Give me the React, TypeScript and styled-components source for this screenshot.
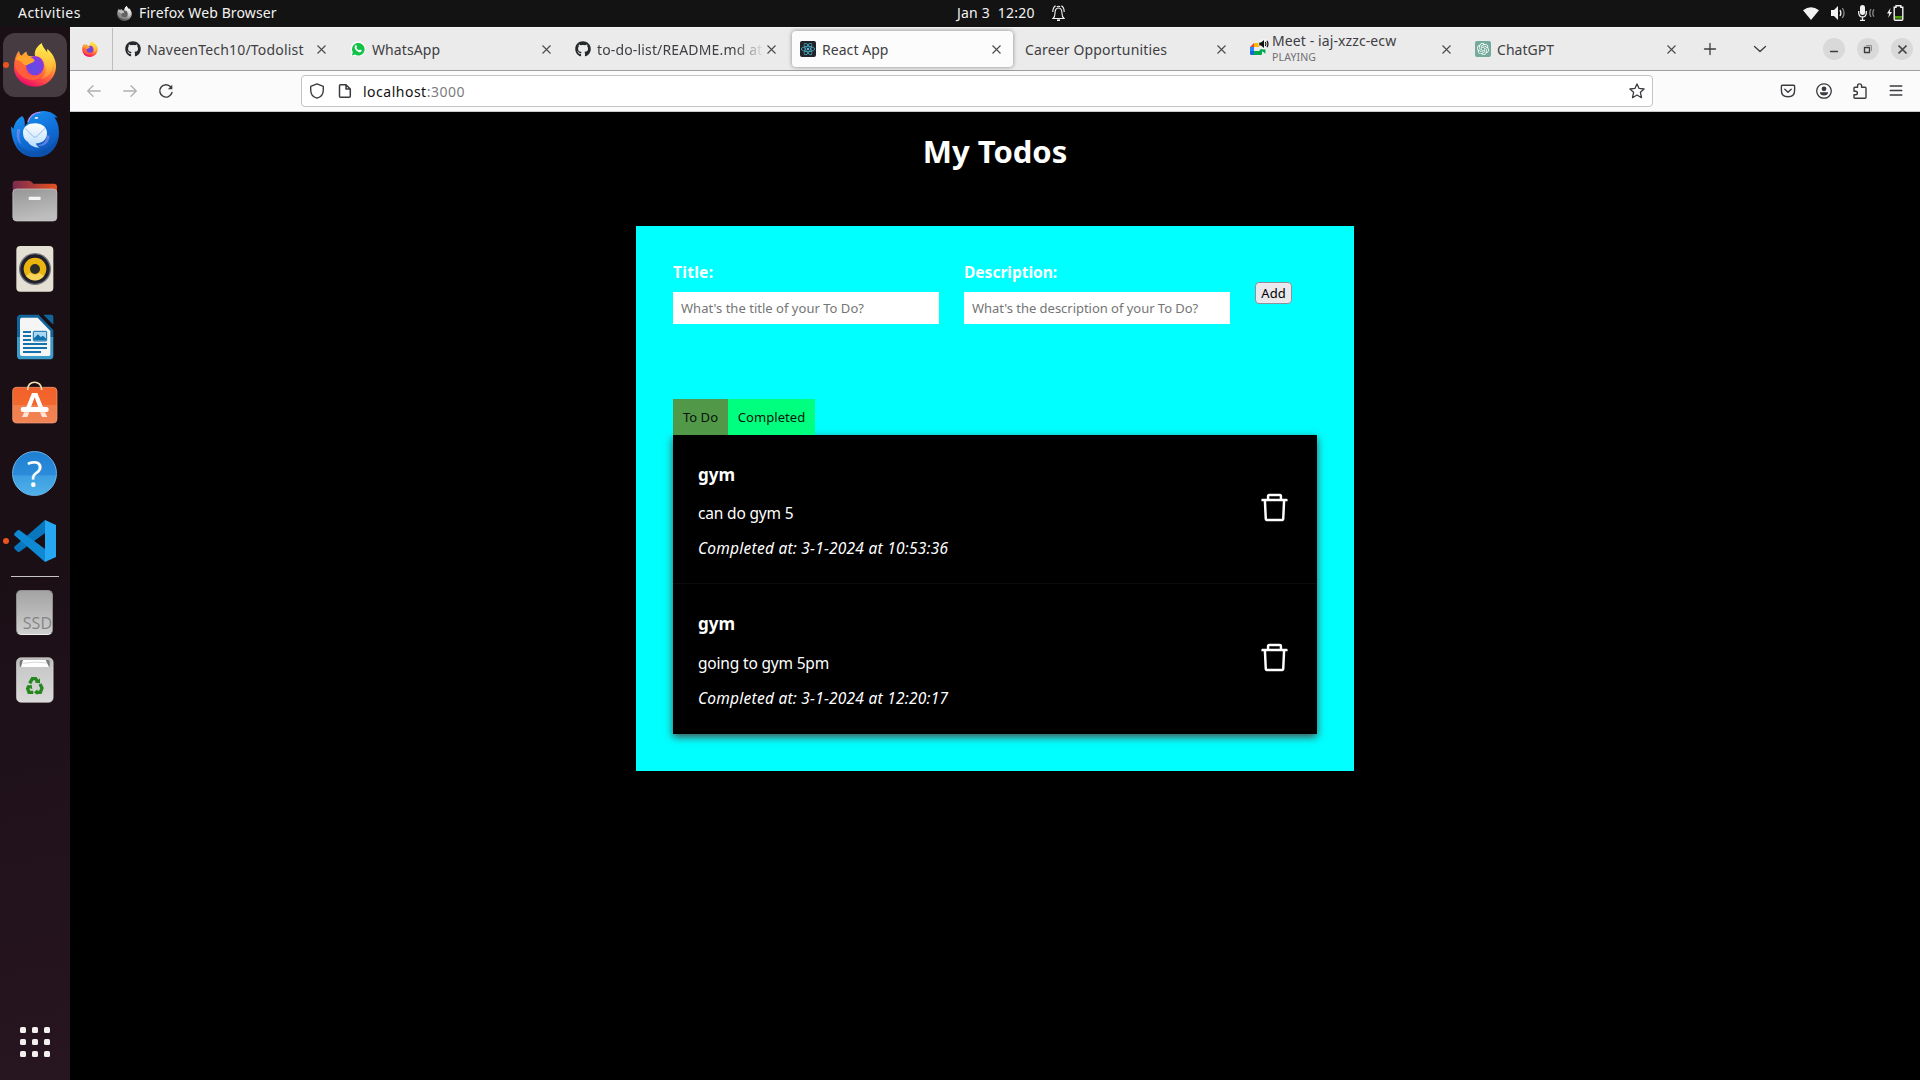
import React from "react";
import styled, { createGlobalStyle, css } from "styled-components";
import { FaGithub, FaReact } from "react-icons/fa";
import { SiOpenai } from "react-icons/si";
import { AiOutlineDelete } from "react-icons/ai";

const GlobalStyle = createGlobalStyle`
  * { box-sizing: border-box; }
  html, body { margin: 0; padding: 0; background: #000; overflow: hidden; }
  body { font-family: "Noto Sans", "Open Sans", sans-serif; }
  svg { display: block; flex: none; }
`;

const Screen = styled.div`
  width: 1920px;
  height: 1080px;
  display: flex;
  flex-direction: column;
  overflow: hidden;
  background: #000;
`;

/* ---------- system bar ---------- */

const SystemBar = styled.header`
  height: 27px;
  flex: none;
  display: grid;
  grid-template-columns: 1fr auto 1fr;
  align-items: center;
  background: #131313;
  color: #f2f2f2;
  font-size: 14px;
  line-height: 24px;
  white-space: nowrap;
`;

const BarLeft = styled.div`
  display: flex;
  align-items: center;
  padding-left: 18px;
`;

const ActivitiesLabel = styled.span`
  width: 99px;
  padding-bottom: 1px;
  letter-spacing: 0.45px;
`;

const FocusedApp = styled.span`
  margin-left: 7px;
  padding-bottom: 1px;
  letter-spacing: 0.12px;
`;

const BarCenter = styled.div`
  display: flex;
  align-items: center;
  gap: 18px;
  padding-left: 102px;
`;

const Clock = styled.span`
  width: 77px;
  padding-bottom: 1px;
  letter-spacing: 0.22px;
  white-space: pre;
`;

const BarRight = styled.div`
  display: flex;
  justify-content: flex-end;
  align-items: center;
  gap: 12px;
  padding: 0 16px 1px 0;
`;

/* ---------- dock ---------- */

const Workspace = styled.div`
  flex: 1;
  display: flex;
  min-height: 0;
`;

const Dock = styled.nav`
  width: 70px;
  flex: none;
  display: flex;
  flex-direction: column;
  align-items: center;
  padding: 4px 0 23px;
  background: linear-gradient(170deg, #1a0f15 0%, #1b0f16 50%, #27151f 100%);
`;

const DockItem = styled.div`
  width: 70px;
  height: 68px;
  flex: none;
  display: grid;
  grid-template-columns: 3px 64px 3px;
  align-items: center;
`;

const RunningDot = styled.span<{ $on?: boolean }>`
  width: 6px;
  height: 6px;
  margin-left: 3px;
  border-radius: 50%;
  background: ${(p) => (p.$on ? "#e95420" : "transparent")};
  z-index: 1;
`;

const DockTile = styled.div<{ $active?: boolean; $lift?: number }>`
  width: 64px;
  height: 64px;
  padding-bottom: ${(p) => p.$lift ?? 0}px;
  border-radius: 12px;
  display: flex;
  align-items: center;
  justify-content: center;
  background: ${(p) => (p.$active ? "#453b40" : "transparent")};
`;

const DockDivider = styled.hr`
  width: 48px;
  height: 1px;
  margin: 1px 0;
  border: 0;
  background: #c6c3c4;
`;

const HelpIcon = styled.div`
  width: 45px;
  height: 45px;
  margin-right: 1px;
  border-radius: 50%;
  border: 1px solid #6db4ea;
  background: linear-gradient(#1f80d2 0%, #2b8cdb 54%, #3d9ee1 55%, #4fb0ea 100%);
  color: #fff;
  font: 400 36px/43px "Open Sans", sans-serif;
  text-align: center;
`;

const DriveIcon = styled.div`
  width: 37px;
  height: 45px;
  margin-right: 1px;
  display: flex;
  align-items: flex-end;
  justify-content: flex-end;
  border-radius: 5px;
  border: 1px solid #8e8e8e;
  border-bottom-color: #eee;
  background: linear-gradient(#a3a3a3, #cfcfcf);
  color: #858585;
  font: 400 16px/22px "Open Sans", sans-serif;
`;

const AppGrid = styled.div`
  margin-top: auto;
  display: grid;
  grid-template-columns: repeat(3, 6px);
  grid-auto-rows: 6px;
  gap: 6px;
`;

const AppDot = styled.i`
  border-radius: 1.5px;
  background: #f2f1f0;
`;

/* ---------- browser chrome ---------- */

const Browser = styled.main`
  flex: 1;
  min-width: 0;
  display: flex;
  flex-direction: column;
  background: #000;
`;

const TabStrip = styled.div`
  height: 44px;
  flex: none;
  display: flex;
  align-items: stretch;
  background: #ebebeb;
  border-bottom: 1px solid #9f9d9f;
  border-top: 1px solid #f6f6f6;
`;

const PinnedTab = styled.div`
  width: 43px;
  padding-left: 12px;
  display: flex;
  align-items: center;
  border-right: 1px solid #bdbdbd;
  margin-right: 2px;
`;

const Tab = styled.div<{ $active?: boolean }>`
  width: 221px;
  height: 36px;
  margin: 3px 2px;
  padding: 0 8px;
  display: flex;
  align-items: center;
  border-radius: 4px;
  color: #3f3e43;
  ${(p) =>
    p.$active &&
    css`
      background: #fcfcfc;
      box-shadow: 0 0 4px rgba(0, 0, 0, 0.42);
    `}
`;

const TabIcon = styled.div`
  width: 16px;
  height: 16px;
  margin-right: 6px;
  flex: none;
`;

const TabText = styled.div<{ $fade?: boolean }>`
  flex: 1;
  min-width: 0;
  overflow: hidden;
  white-space: nowrap;
  ${(p) =>
    p.$fade &&
    css`
      mask-image: linear-gradient(to right, #000 calc(100% - 30px), transparent);
    `}
`;

const TabTitle = styled.div<{ $spacing: number; $tight?: boolean }>`
  padding-top: ${(p) => (p.$tight ? 0 : 2)}px;
  font-size: 14px;
  line-height: ${(p) => (p.$tight ? 16 : 20)}px;
  letter-spacing: ${(p) => p.$spacing}px;
`;

const TabStatus = styled.div`
  padding-top: 1px;
  font-size: 10.5px;
  line-height: 15px;
  color: #716f74;
  letter-spacing: 0.15px;
`;

const TabClose = styled.div`
  width: 16px;
  padding-right: 1px;
  display: flex;
  justify-content: center;
`;

const ReactBadge = styled.div`
  width: 16px;
  height: 16px;
  border-radius: 2px;
  display: grid;
  place-items: center;
  background: #20232a;
  color: #53c1de;
`;

const GptBadge = styled(ReactBadge)`
  background: #74aa9c;
  color: #fff;
`;

const StripActions = styled.div`
  flex: 1;
  display: flex;
  align-items: center;
  justify-content: flex-end;
  padding-right: 7px;
`;

const StripIcon = styled.div<{ $gap: number }>`
  margin-right: ${(p) => p.$gap}px;
`;

const WindowButton = styled.div`
  width: 22px;
  height: 22px;
  margin-left: 12px;
  border-radius: 50%;
  display: grid;
  place-items: center;
  background: #d9d9d9;
`;

const Toolbar = styled.div`
  height: 41px;
  flex: none;
  display: flex;
  align-items: center;
  padding: 0 16px;
  background: #fbfbfb;
  border-bottom: 1px solid #c9c9cb;
`;

const NavButtons = styled.div`
  width: 215px;
  display: flex;
  gap: 20px;
`;

const AddressBar = styled.div`
  width: 1352px;
  height: 32px;
  display: flex;
  align-items: center;
  padding: 0 7px;
  border: 1px solid #c4c3c6;
  border-radius: 4px;
  background: #fff;
`;

const Url = styled.div`
  flex: 1;
  margin-left: 10px;
  padding-top: 2px;
  font-size: 14px;
  line-height: 20px;
  letter-spacing: 0.5px;
  color: #111;
`;

const Port = styled.span`
  color: #7c7c80;
`;

const ToolbarIcons = styled.div`
  flex: 1;
  display: flex;
  justify-content: flex-end;
  gap: 20px;
`;

/* ---------- todo page ---------- */

const Page = styled.section`
  flex: 1;
  display: flex;
  flex-direction: column;
  align-items: center;
  background: #000;
  color: #fff;
`;

const Heading = styled.h1`
  margin: 18px 0 0;
  height: 96px;
  font-size: 31px;
  line-height: 42px;
  font-weight: 700;
`;

const Card = styled.div`
  width: 718px;
  height: 545px;
  padding: 36px 37px;
  background: #00ffff;
`;

const Form = styled.form`
  display: flex;
  align-items: flex-start;
  gap: 25px;
  height: 137px;
`;

const Field = styled.label`
  width: 266px;
  display: flex;
  flex-direction: column;
`;

const FieldName = styled.span<{ $spacing: number }>`
  height: 30px;
  font-size: 15.5px;
  line-height: 21px;
  font-weight: 700;
  letter-spacing: ${(p) => p.$spacing}px;
`;

const TextInput = styled.input<{ $spacing: number }>`
  width: 266px;
  height: 32px;
  padding: 0 8px;
  border: 0;
  background: #fff;
  font: 400 13px "Noto Sans", sans-serif;
  letter-spacing: ${(p) => p.$spacing}px;
  &::placeholder {
    color: #757575;
    opacity: 1;
  }
`;

const AddButton = styled.button`
  width: 37px;
  height: 22px;
  margin-top: 20px;
  padding: 0;
  border: 1px solid #8f8f9d;
  border-radius: 4px;
  background: #e9e9ed;
  color: #000;
  font: 400 13px/19px "Noto Sans", sans-serif;
`;

const Filters = styled.div`
  display: flex;
  height: 36px;
`;

const Filter = styled.button<{ $width: number; $color: string }>`
  width: ${(p) => p.$width}px;
  height: 36px;
  padding: 0;
  border: 0;
  background: ${(p) => p.$color};
  color: #05130a;
  font: 400 13px/36px "Noto Sans", sans-serif;
  letter-spacing: 0.05px;
`;

const TodoList = styled.div`
  height: 299px;
  background: #000;
  box-shadow: 0 3px 8px #4c4c4c;
`;

const TodoTitle = styled.h3`
  margin: 0 0 14px;
  font-size: 17px;
  line-height: 26px;
  font-weight: 700;
`;

const TodoText = styled.p`
  margin: 0 0 13px;
  font-size: 15.5px;
  line-height: 22px;
  letter-spacing: -0.18px;
  white-space: nowrap;
`;

const TodoDone = styled.p`
  margin: 0;
  font-size: 15.5px;
  line-height: 22px;
  font-style: italic;
  letter-spacing: 0.24px;
  white-space: nowrap;
`;

const DeleteIcon = styled(AiOutlineDelete)`
  width: 35px;
  height: 35px;
  margin-top: 28px;
`;

const Todo = styled.article`
  height: 148px;
  display: flex;
  align-items: flex-start;
  justify-content: space-between;
  padding: 27px 25px 0 25px;
  & + & {
    height: 151px;
    border-top: 1px solid #0c0c0c;
  }
  & + & ${TodoTitle} {
    margin-bottom: 15px;
  }
  & + & ${DeleteIcon} {
    margin-top: 29px;
  }
`;

/* ---------- drawings ---------- */

const GrayLogo = styled.div`
  filter: grayscale(1) brightness(1.1);
`;

function Firefox({ w, h, id }: { w: number; h: number; id: string }) {
  return (
    <svg width={w} height={h} viewBox="42 53 126 130">
      <defs>
        <linearGradient id={`${id}a`} x1="0.75" y1="0.05" x2="0.3" y2="1">
          <stop offset="0" stopColor="#fff44f" />
          <stop offset="0.3" stopColor="#ffb932" />
          <stop offset="0.55" stopColor="#ff7139" />
          <stop offset="0.8" stopColor="#ff3750" />
          <stop offset="1" stopColor="#e2056e" />
        </linearGradient>
        <radialGradient id={`${id}b`} cx="0.45" cy="0.6" r="0.6">
          <stop offset="0" stopColor="#5b4fe0" />
          <stop offset="0.7" stopColor="#7a3fe4" />
          <stop offset="1" stopColor="#a02fd0" />
        </radialGradient>
        <linearGradient id={`${id}c`} x1="0.5" y1="0" x2="0.4" y2="1">
          <stop offset="0" stopColor="#fff050" />
          <stop offset="0.6" stopColor="#ffbd3a" />
          <stop offset="1" stopColor="#ff7a3c" />
        </linearGradient>
      </defs>
      <path fill={`url(#${id}a)`} d="M42 124C42 103 47 87 57 75C58 82 60 86 64 90C69 86 73 79 80 78C79 83 82 88 87 91L106 92C102 83 105 67 125 53C127 65 133 74 142 83C141 77 141 73 142 70C154 79 168 99 168 121C168 156 140 183 105 183C70 183 42 157 42 124Z" />
      <path fill={`url(#${id}c)`} d="M106 94C101 80 110 63 125 53C128 69 155 88 157 114C159 140 143 156 122 161C134 149 139 139 136 124C133 107 120 98 106 94Z" />
      <path fill="#ff6a36" d="M44 112C52 98 70 94 84 95C70 105 70 135 84 145C100 154 118 153 130 141C126 160 100 168 80 160C60 152 46 135 44 112Z" opacity="0.75" />
      <ellipse cx="105" cy="120" rx="27" ry="29" fill={`url(#${id}b)`} />
      <path fill="#ffa52e" d="M47 101C53 89 61 87 70 92C82 91 98 94 104 104C101 113 88 112 81 119C73 119 69 116 65 108C58 106 52 103 47 101Z" />
    </svg>
  );
}

const Thunderbird = () => (
  <svg width="48" height="48" viewBox="33 251 144 144">
    <defs>
      <linearGradient id="tb" x1="0" y1="0" x2="0.5" y2="1">
        <stop offset="0" stopColor="#1b9bf5" />
        <stop offset="0.6" stopColor="#1170da" />
        <stop offset="1" stopColor="#0d55b8" />
      </linearGradient>
      <linearGradient id="tbm" x1="0" y1="0" x2="0" y2="1">
        <stop offset="0" stopColor="#fff" />
        <stop offset="1" stopColor="#b9dcfb" />
      </linearGradient>
    </defs>
    <path fill="url(#tb)" d="M33 303L40 311C43 294 52 280 67 272C75 281 75 294 74 303L84 292C88 272 105 257 132 257C151 258 163 266 173 277L163 276C170 286 177 299 177 323C177 365 148 396 107 396C65 396 34 365 33 303Z" />
    <path fill="#0d4ea6" opacity="0.55" d="M49 351C66 373 91 383 116 377C145 372 167 353 174 333C172 371 146 396 107 396C81 396 58 383 49 351Z" />
    <path fill="none" stroke="#b58af0" strokeWidth="4" d="M83 291C89 272 104 261 121 261" />
    <path fill="#7f8ff0" opacity="0.7" d="M52 311C47 330 52 349 64 357C56 340 57 324 62 312ZM140 330C140 346 132 358 111 360C131 367 147 353 149 331Z" />
    <path fill="url(#tbm)" d="M69 322C69 304 85 294 106 294C127 294 141 307 141 323C141 342 128 354 108 354C109 360 112 364 119 367C100 367 88 358 84 350C75 345 69 336 69 322Z" />
    <path fill="none" stroke="#8cbcf0" strokeWidth="3" d="M75 309L100 334Q105 338 110 334L135 309" />
    <path fill="#fff" d="M103 279Q109 272 115 277Q111 283 103 279Z" />
  </svg>
);

const Files = () => (
  <svg width="46" height="42" viewBox="37 467 138 124">
    <defs>
      <linearGradient id="fb" x1="0" x2="1">
        <stop offset="0" stopColor="#792a50" />
        <stop offset="1" stopColor="#e8521f" />
      </linearGradient>
      <linearGradient id="ff" x1="0" y1="0" x2="0.3" y2="1">
        <stop offset="0" stopColor="#969696" />
        <stop offset="1" stopColor="#bebebe" />
      </linearGradient>
    </defs>
    <path fill="url(#fb)" d="M39 510V477Q39 468 48 468H88Q93 468 97 473L101 477H163Q172 477 172 486V510Z" />
    <rect x="39.5" y="493" width="132" height="96" rx="11" fill="url(#ff)" stroke="#cfcfcf" strokeWidth="2" />
    <rect x="87" y="516" width="36" height="10" rx="3" fill="#f5f5f5" />
  </svg>
);

const Rhythmbox = () => (
  <svg width="38" height="46" viewBox="48 664 114 138">
    <rect x="49" y="664" width="111" height="137" rx="12" fill="#e5e0d4" />
    <circle cx="105" cy="733" r="48" fill="#73737a" />
    <circle cx="105" cy="733" r="44" fill="#20202c" />
    <circle cx="105" cy="733" r="34" fill="#eab30e" />
    <path d="M78 754A34 34 0 0 0 132 754L118 744A17 17 0 0 1 92 744Z" fill="#f8d558" />
    <circle cx="105" cy="733" r="15" fill="#2c2c2a" />
  </svg>
);

const Writer = () => (
  <svg width="38" height="46" viewBox="48 42 114 138">
    <path fill="#11659c" d="M62 44H116L160 90V112H51V55Q51 44 62 44Z" />
    <path fill="#3a9aca" d="M51 111H160V167Q160 178 149 178H62Q51 178 51 167Z" />
    <path fill="#f5f5f5" d="M66 53H113L151 93V163Q151 168 146 168H66Q60 168 60 162V59Q60 53 66 53Z" />
    <path fill="#1a0f15" d="M116 43H129L161 75V91Z" />
    <path fill="#11659c" d="M130 44H154Q160 44 160 50V74Z" />
    <path stroke="#1272ae" strokeWidth="5.5" d="M69 96H93M69 108H93M69 120H93M69 132H141M69 144H141M69 156H123" />
    <rect x="100" y="94" width="40" height="29" rx="2" fill="#a9d8f5" stroke="#1272ae" strokeWidth="3" />
    <path fill="#1272ae" d="M102 121V114L114 103L122 111L129 107L139 116V121Z" />
  </svg>
);

const Software = () => (
  <svg width="46" height="44" viewBox="37 240 138 132">
    <defs>
      <linearGradient id="sw" x1="0" y1="0" x2="0" y2="1">
        <stop offset="0" stopColor="#f2602a" />
        <stop offset="0.5" stopColor="#f2692f" />
        <stop offset="0.51" stopColor="#f37e4c" />
        <stop offset="1" stopColor="#f08455" />
      </linearGradient>
    </defs>
    <rect x="39" y="262" width="133" height="107" rx="12" fill="url(#sw)" stroke="#f9a27c" strokeWidth="2" />
    <path fill="none" stroke="#f6dfb0" strokeWidth="5" d="M84 270C82 239 127 239 126 270" />
    <path fill="#fff" d="M97 279H113L130 321H116L105 292L94 321H80Z" />
    <path fill="#ffe4da" d="M74 337H89L83 351H67ZM121 337H136L143 351H127Z" />
    <rect x="63" y="321" width="84" height="15" rx="7" fill="#fff" />
  </svg>
);

const Code = () => (
  <svg width="42" height="42" viewBox="42 660 126 126">
    <path fill="#0877bd" d="M135 660L43 740Q41 744 45 748L53 755Q57 757 61 754L135 699Z" />
    <path fill="#1089d4" d="M135 786L43 706Q41 702 45 698L53 691Q57 689 61 692L135 747Z" />
    <path fill="#26a7f2" d="M135 660L168 675V771L135 786Z" />
  </svg>
);

const Trash = () => (
  <svg width="38" height="46" viewBox="49 291 114 138">
    <defs>
      <linearGradient id="tr" x1="0" y1="0" x2="0" y2="1">
        <stop offset="0" stopColor="#b8b8b8" />
        <stop offset="0.2" stopColor="#c8c8c8" />
        <stop offset="1" stopColor="#dadada" />
      </linearGradient>
    </defs>
    <rect x="50.5" y="293" width="110" height="134" rx="14" fill="url(#tr)" stroke="#eee" strokeWidth="1.5" />
    <path fill="#777" d="M60 306Q60 300 66 300H144Q150 300 150 306V320H60Z" />
    <path fill="#fff" d="M64 321L70 300H138L148 321Z" />
    <path fill="none" stroke="#aaa" strokeWidth="1.5" d="M70 310Q105 303 143 309" />
    <g fill="none" stroke="#26871f" strokeWidth="10">
      <path d="M90 370L98 356H108L113 364" />
      <path d="M121 372L127 384L122 397H111" />
      <path d="M101 397H88L84 386L89 377" />
    </g>
    <path fill="#26871f" d="M106 368L121 370L121 355ZM113 388V405L103 397ZM79 379L96 374L98 388Z" />
  </svg>
);

const WhatsApp = () => (
  <svg width="16" height="16" viewBox="0 0 16 16">
    <path fill="#fff" d="M0.6 15.6L1.7 11.6A7.5 7.5 0 1 1 4.8 14.5Z" />
    <path fill="#12c148" d="M1.9 14.4L2.8 11.3A6.3 6.3 0 1 1 5 13.6Z" />
    <path fill="#fff" d="M5.5 4.3C6.2 3.8 6.5 4.2 6.7 4.9C7.1 5.9 7 6 6.3 6.8C6.9 8 7.8 8.8 9 9.3C9.9 8.3 9.9 8.4 11.3 9.1C12.1 9.5 11.6 10.6 10.7 11.1C9.5 11.7 8 11 6.6 9.8C4.7 8.1 3.8 5.8 5.5 4.3Z" />
  </svg>
);

const MeetLogo = styled.svg`
  margin-top: -3px;
`;

const Meet = () => (
  <MeetLogo width="21" height="18" viewBox="0 0 21 18">
    <path fill="#ea4335" d="M0 9L4 5V9Z" />
    <path fill="#2684fc" d="M0 9H4V13H0Z" />
    <path fill="#1967d2" d="M0 13H4V17H1.5Q0 17 0 15.5Z" />
    <path fill="#fbbc04" d="M4 5H11Q12 5 12 6V9H4Z" />
    <path fill="#00a94b" d="M4 13H9L12 10V15.5Q12 17 11 17H4ZM12 11L15.4 8.5V15.7L12 13Z" />
    <circle cx="14" cy="6" r="5.6" fill="#f3f3f3" />
    <path fill="#111" d="M9.3 4.5H11L14 2V10L11 7.5H9.3Z" />
    <path fill="none" stroke="#111" strokeWidth="1.2" d="M15.3 4Q16.6 6 15.3 8M17 2.8Q19 6 17 9.2" />
  </MeetLogo>
);

const Close = ({ size = 9, weight = 1.1 }: { size?: number; weight?: number }) => (
  <svg width={size} height={size} viewBox="0 0 9 9">
    <path stroke="#4a494e" strokeWidth={weight} d="M0.5 0.5L8.5 8.5M8.5 0.5L0.5 8.5" />
  </svg>
);

const Glyph = ({ d, size = 16, color = "#3c3b40", weight = 1.3, children }: { d: string; size?: number; color?: string; weight?: number; children?: React.ReactNode }) => (
  <svg width={size} height={size} viewBox="0 0 16 16" fill="none" stroke={color} strokeWidth={weight} strokeLinecap="round" strokeLinejoin="round">
    <path d={d} />
    {children}
  </svg>
);

const Bell = () => (
  <svg width="13" height="17" viewBox="0 0 13 17" fill="none" stroke="#f2f2f2" strokeWidth="1.1">
    <path d="M1 13.5Q3 12 3 8.5Q3 3 6.5 3Q10 3 10 8.5Q10 12 12 13.5Z" />
    <path d="M0.8 7Q0.8 2.5 3.6 0.8M12.2 7Q12.2 2.5 9.4 0.8M4.8 1.8Q6.5 0.6 8.2 1.8" />
    <path d="M5 15.2H8" strokeWidth="1.6" />
  </svg>
);

const Wifi = () => (
  <svg width="16" height="13" viewBox="0 0 16 13">
    <path fill="#f2f2f2" d="M0 3.2Q8 -2.8 16 3.2L8 13Z" />
  </svg>
);

const Volume = () => (
  <svg width="15" height="14" viewBox="0 0 15 14" fill="none" strokeWidth="1.3">
    <path fill="#f2f2f2" d="M0 4H3L7 0V14L3 10H0Z" />
    <path stroke="#f2f2f2" d="M9 4Q10.8 7 9 10" />
    <path stroke="#8d8d8d" d="M11.3 2Q14.8 7 11.3 12" />
  </svg>
);

const Mic = () => (
  <svg width="17" height="16" viewBox="0 0 17 16" fill="none" strokeWidth="1.3">
    <rect x="2" y="0" width="5" height="10" rx="2.5" fill="#f2f2f2" />
    <path stroke="#f2f2f2" d="M0.7 6V8Q1 12 4.5 12Q8 12 8.3 8V6M4.5 12V15.3M2 15.3H7" />
    <path stroke="#8d8d8d" d="M13 4Q10.5 8 13 12M16 4.3Q13.5 8 16 11.7" />
  </svg>
);

const Battery = () => (
  <svg width="17" height="16" viewBox="0 0 17 16">
    <path fill="#f2f2f2" d="M3.5 3L0 8.5H2.2L1.2 13L5 7H2.8Z" />
    <path fill="none" stroke="#f2f2f2" strokeWidth="1.4" d="M9 2.2V0.8H13.8V2.2H15.8V14.2Q15.8 15.2 14.8 15.2H8.2Q7.2 15.2 7.2 14.2V2.2Z" />
    <rect x="8" y="11" width="7" height="2.6" fill="#4e9a06" />
  </svg>
);

/* ---------- content ---------- */

type DockEntry = { name: string; icon: React.ReactNode; running?: boolean; active?: boolean; lift?: number };

const dockApps: DockEntry[] = [
  { name: "firefox", icon: <Firefox w={42} h={44} id="dock" />, running: true, active: true },
  { name: "thunderbird", icon: <Thunderbird /> },
  { name: "files", icon: <Files /> },
  { name: "rhythmbox", icon: <Rhythmbox /> },
  { name: "writer", icon: <Writer /> },
  { name: "software", icon: <Software />, lift: 6 },
  { name: "help", icon: <HelpIcon>?</HelpIcon> },
  { name: "code", icon: <Code />, running: true },
];

const dockDevices: DockEntry[] = [
  { name: "ssd", icon: <DriveIcon>SSD</DriveIcon> },
  { name: "trash", icon: <Trash /> },
];

const tabs = [
  { title: "NaveenTech10/Todolist", icon: <FaGithub size={16} color="#24292e" />, spacing: 0.19 },
  { title: "WhatsApp", icon: <WhatsApp />, spacing: 0.1 },
  { title: "to-do-list/README.md at", icon: <FaGithub size={16} color="#24292e" />, spacing: 0.15, fade: true },
  { title: "React App", icon: <ReactBadge><FaReact size={14} /></ReactBadge>, spacing: 0.05, active: true },
  { title: "Career Opportunities", spacing: 0.15 },
  { title: "Meet - iaj-xzzc-ecw", icon: <Meet />, spacing: 0.1, status: "PLAYING" },
  { title: "ChatGPT", icon: <GptBadge><SiOpenai size={12} /></GptBadge>, spacing: 0.05 },
];

const todos = [
  { title: "gym", text: "can do gym 5", done: "Completed at: 3-1-2024 at 10:53:36" },
  { title: "gym", text: "going to gym 5pm", done: "Completed at: 3-1-2024 at 12:20:17" },
];

const DockButton = ({ app }: { app: DockEntry }) => (
  <DockItem>
    <RunningDot $on={app.running} />
    <DockTile $active={app.active} $lift={app.lift}>{app.icon}</DockTile>
  </DockItem>
);

export default function App() {
  return (
    <Screen>
      <GlobalStyle />
      <SystemBar>
        <BarLeft>
          <ActivitiesLabel>Activities</ActivitiesLabel>
          <GrayLogo>
            <Firefox w={15} h={15} id="bar" />
          </GrayLogo>
          <FocusedApp>Firefox Web Browser</FocusedApp>
        </BarLeft>
        <BarCenter>
          <Clock>Jan 3  12:20</Clock>
          <Bell />
        </BarCenter>
        <BarRight>
          <Wifi />
          <Volume />
          <Mic />
          <Battery />
        </BarRight>
      </SystemBar>
      <Workspace>
        <Dock>
          {dockApps.map((a) => (
            <DockButton key={a.name} app={a} />
          ))}
          <DockDivider />
          {dockDevices.map((a) => (
            <DockButton key={a.name} app={a} />
          ))}
          <AppGrid>
            {Array.from({ length: 9 }, (_, i) => (
              <AppDot key={i} />
            ))}
          </AppGrid>
        </Dock>
        <Browser>
          <TabStrip>
            <PinnedTab>
              <Firefox w={16} h={16} id="pin" />
            </PinnedTab>
            {tabs.map((t) => (
              <Tab key={t.title} $active={t.active}>
                {t.icon && <TabIcon>{t.icon}</TabIcon>}
                <TabText $fade={t.fade}>
                  <TabTitle $spacing={t.spacing} $tight={!!t.status}>{t.title}</TabTitle>
                  {t.status && <TabStatus>{t.status}</TabStatus>}
                </TabText>
                <TabClose>
                  <Close />
                </TabClose>
              </Tab>
            ))}
            <StripActions>
              <StripIcon $gap={34}>
                <Glyph d="M2.5 8H13.5M8 2.5V13.5" />
              </StripIcon>
              <StripIcon $gap={43}>
                <Glyph d="M2.5 5.5L8 10.5L13.5 5.5" />
              </StripIcon>
              <WindowButton>
                <Glyph d="M4.5 10.5H11.5" />
              </WindowButton>
              <WindowButton>
                <Glyph d="M4.5 6.5H9.5V11.5H4.5Z" weight={1.4}>
                  <path d="M6.5 4.5H11.5V9.5" stroke="#8f8f8f" strokeWidth="1" />
                </Glyph>
              </WindowButton>
              <WindowButton>
                <Close size={9} weight={1.6} />
              </WindowButton>
            </StripActions>
          </TabStrip>
          <Toolbar>
            <NavButtons>
              <Glyph color="#b0b0b2" d="M14.3 8H1.7M7 2.7L1.7 8L7 13.3" />
              <Glyph color="#b0b0b2" d="M1.7 8H14.3M9 2.7L14.3 8L9 13.3" />
              <Glyph weight={1.4} d="M14 9.5A6.2 6.2 0 1 1 12.8 4">
                <path d="M14.3 1.8V6.3H9.8Z" fill="#3c3b40" stroke="none" />
              </Glyph>
            </NavButtons>
            <AddressBar>
              <Glyph weight={1.4} d="M8 0.9L14.3 3.4V7C14.3 11 11.5 14.2 8 15.2C4.5 14.2 1.7 11 1.7 7V3.4Z" />
              <StripIcon $gap={12} />
              <Glyph weight={1.5} d="M3.5 1.7H9L13.3 6V13.3Q13.3 14.3 12.3 14.3H3.5Q2.5 14.3 2.5 13.3V2.7Q2.5 1.7 3.5 1.7ZM9 1.7V6H13.3" />
              <Url>
                localhost<Port>:3000</Port>
              </Url>
              <Glyph d="M8 0.9L10.1 5.4L15.1 6L11.4 9.3L12.5 14.7L8 12L3.5 14.7L4.6 9.3L0.9 6L5.9 5.4Z" />
            </AddressBar>
            <ToolbarIcons>
              <Glyph weight={1.4} d="M2.3 2.2H13.7Q14.6 2.2 14.6 3.1V7.5Q14.6 13.7 8 13.7Q1.4 13.7 1.4 7.5V3.1Q1.4 2.2 2.3 2.2ZM4.8 6.2L8 9.2L11.2 6.2" />
              <Glyph weight={1.3} d="M8 0.8A7.2 7.2 0 1 1 7.99 0.8Z">
                <circle cx="8" cy="5.8" r="2.4" fill="#3c3b40" stroke="none" />
                <path d="M3.8 9.2H12.2Q11.6 12.4 8 12.4Q4.4 12.4 3.8 9.2Z" fill="#3c3b40" stroke="none" />
              </Glyph>
              <Glyph weight={1.4} d="M5.6 4.2V2.8Q5.6 0.9 7.6 0.9Q9.6 0.9 9.6 2.8V4.2H13Q14 4.2 14 5.2V14.2Q14 15.2 13 15.2H3Q2 15.2 2 14.2V11.8H3.6Q5.4 11.8 5.4 10Q5.4 8.2 3.6 8.2H2V5.2Q2 4.2 3 4.2Z" />
              <Glyph weight={1.4} d="M2.2 3H13.8M2.2 7.5H13.8M2.2 12H13.8" />
            </ToolbarIcons>
          </Toolbar>
          <Page>
            <Heading>My Todos</Heading>
            <Card>
              <Form>
                <Field>
                  <FieldName $spacing={0.3}>Title:</FieldName>
                  <TextInput $spacing={0.02} placeholder="What's the title of your To Do?" />
                </Field>
                <Field>
                  <FieldName $spacing={0}>Description:</FieldName>
                  <TextInput $spacing={-0.03} placeholder="What's the description of your To Do?" />
                </Field>
                <AddButton type="button">Add</AddButton>
              </Form>
              <Filters>
                <Filter $width={55} $color="#529849">To Do</Filter>
                <Filter $width={87} $color="#00ff7f">Completed</Filter>
              </Filters>
              <TodoList>
                {todos.map((t) => (
                  <Todo key={t.text}>
                    <div>
                      <TodoTitle>{t.title}</TodoTitle>
                      <TodoText>{t.text}</TodoText>
                      <TodoDone>{t.done}</TodoDone>
                    </div>
                    <DeleteIcon />
                  </Todo>
                ))}
              </TodoList>
            </Card>
          </Page>
        </Browser>
      </Workspace>
    </Screen>
  );
}
